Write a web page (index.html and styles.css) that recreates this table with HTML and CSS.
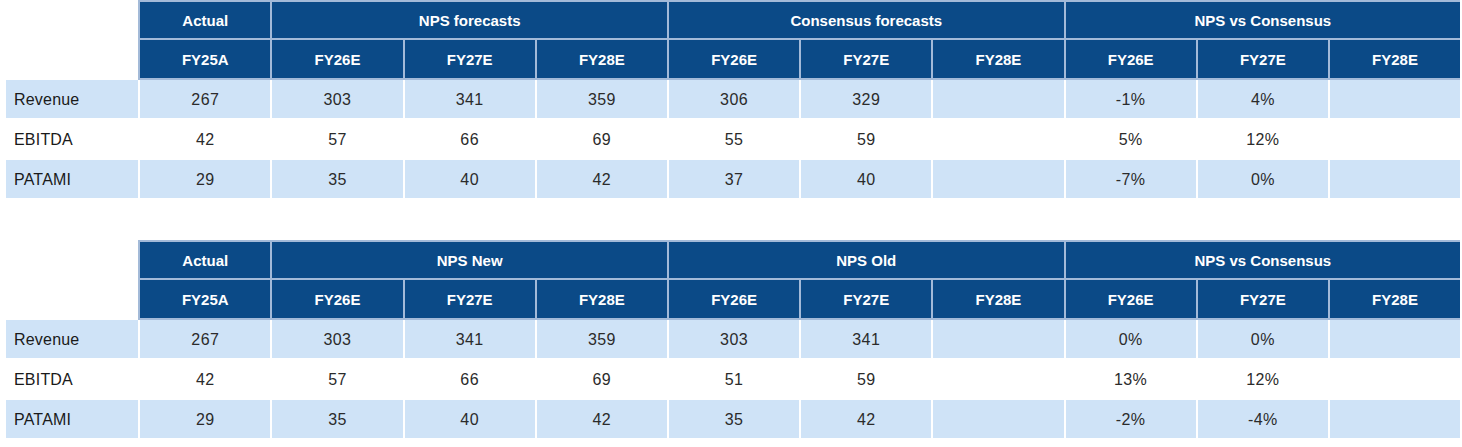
FILE: index.html
```html
<!DOCTYPE html>
<html>
<head>
<meta charset="utf-8">
<link rel="stylesheet" href="styles.css">
</head>
<body>
<div class="page">
<table class="fin">
  <colgroup><col span="11" class="c"></colgroup>
  <thead>
    <tr class="h1">
      <th class="blank"></th>
      <th>Actual</th>
      <th colspan="3">NPS forecasts</th>
      <th colspan="3">Consensus forecasts</th>
      <th colspan="3">NPS vs Consensus</th>
    </tr>
    <tr class="h2">
      <th class="blank"></th>
      <th>FY25A</th>
      <th>FY26E</th><th>FY27E</th><th>FY28E</th>
      <th>FY26E</th><th>FY27E</th><th>FY28E</th>
      <th>FY26E</th><th>FY27E</th><th>FY28E</th>
    </tr>
  </thead>
  <tbody>
    <tr class="shade"><td class="lbl">Revenue</td><td>267</td><td>303</td><td>341</td><td>359</td><td>306</td><td>329</td><td></td><td>-1%</td><td>4%</td><td></td></tr>
    <tr class="plain"><td class="lbl">EBITDA</td><td>42</td><td>57</td><td>66</td><td>69</td><td>55</td><td>59</td><td></td><td>5%</td><td>12%</td><td></td></tr>
    <tr class="shade"><td class="lbl">PATAMI</td><td>29</td><td>35</td><td>40</td><td>42</td><td>37</td><td>40</td><td></td><td>-7%</td><td>0%</td><td></td></tr>
  </tbody>
</table>

<table class="fin second">
  <colgroup><col span="11" class="c"></colgroup>
  <thead>
    <tr class="h1">
      <th class="blank"></th>
      <th>Actual</th>
      <th colspan="3">NPS New</th>
      <th colspan="3">NPS Old</th>
      <th colspan="3">NPS vs Consensus</th>
    </tr>
    <tr class="h2">
      <th class="blank"></th>
      <th>FY25A</th>
      <th>FY26E</th><th>FY27E</th><th>FY28E</th>
      <th>FY26E</th><th>FY27E</th><th>FY28E</th>
      <th>FY26E</th><th>FY27E</th><th>FY28E</th>
    </tr>
  </thead>
  <tbody>
    <tr class="shade"><td class="lbl">Revenue</td><td>267</td><td>303</td><td>341</td><td>359</td><td>303</td><td>341</td><td></td><td>0%</td><td>0%</td><td></td></tr>
    <tr class="plain"><td class="lbl">EBITDA</td><td>42</td><td>57</td><td>66</td><td>69</td><td>51</td><td>59</td><td></td><td>13%</td><td>12%</td><td></td></tr>
    <tr class="shade"><td class="lbl">PATAMI</td><td>29</td><td>35</td><td>40</td><td>42</td><td>35</td><td>42</td><td></td><td>-2%</td><td>-4%</td><td></td></tr>
  </tbody>
</table>
</div>
</body>
</html>
```

FILE: styles.css
```css
html, body {
  margin: 0;
  padding: 0;
  background: #ffffff;
}
.page {
  padding: 0 2px 0 6px;
  display: flex;
  flex-direction: column;
  gap: 40px;
  font-family: "Liberation Sans", Arial, sans-serif;
}
.fin {
  width: 1454px;
  table-layout: fixed;
  border-collapse: separate;
  border-spacing: 0;
}
.fin col.c {
  width: 132.2px;
}
.fin th,
.fin td {
  height: 38px;
  padding: 0;
  text-align: center;
  vertical-align: middle;
  box-sizing: content-box;
}
.fin th {
  background: #0b4a87;
  color: #ffffff;
  font-weight: bold;
  font-size: 15px;
  border-left: 2px solid #a3bad8;
  border-bottom: 2px solid #a3bad8;
}
.fin tr.h1 th {
  border-top: 2px solid #a3bad8;
  height: 36px;
}
.fin tr th.blank {
  background: transparent;
  border: none;
  height: 38px;
}
.fin tr.h1 th.blank {
  height: 40px;
}
.fin td {
  font-size: 16px;
  color: #2b2b2b;
  border-left: 2px solid #ffffff;
  border-bottom: 2px solid #ffffff;
  letter-spacing: 0.4px;
  padding-top: 2px;
  height: 36px;
}
.fin td.lbl {
  text-align: left;
  padding-left: 8px;
  border-left: none;
  letter-spacing: 0.2px;
  color: #1a1a1a;
}
.fin tr.shade td {
  background: #cfe3f7;
}
.fin tr.plain td {
  background: #ffffff;
}
```
